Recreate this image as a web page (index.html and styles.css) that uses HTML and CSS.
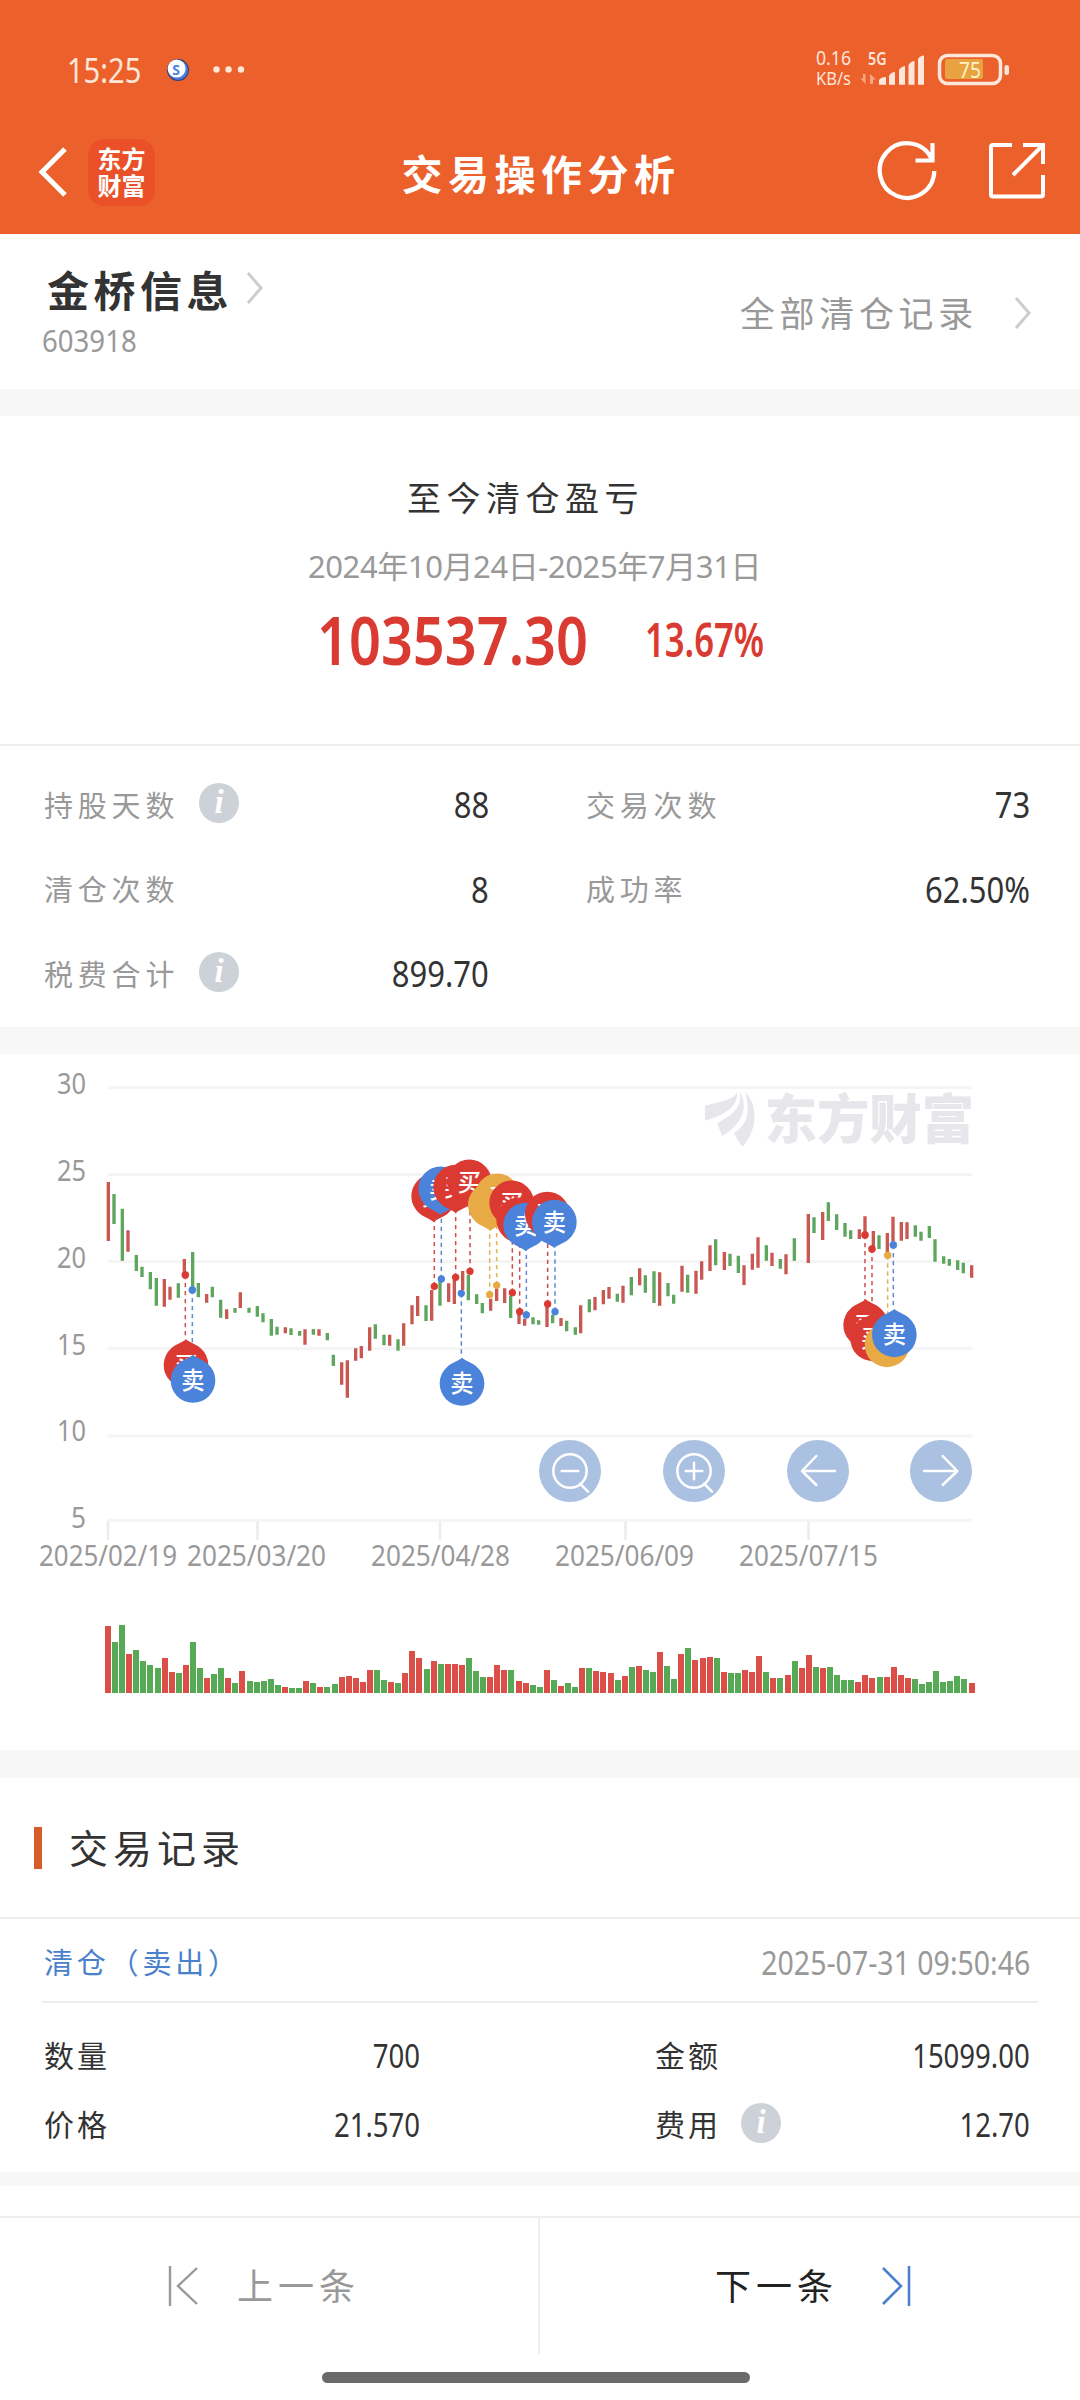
FILE: index.html
```html
<!DOCTYPE html>
<html lang="zh-CN">
<head>
<meta charset="utf-8">
<title>交易操作分析</title>
<link rel="stylesheet" href="styles.css">
</head>
<body>
<header class="top">
  <div class="status">
    <span class="num clock">15:25</span>
    <svg class="notif" width="86" height="28" viewBox="0 0 86 28">
      <circle cx="14" cy="14" r="11" fill="#2f3f78"/><circle cx="14" cy="14" r="10" fill="#4d7be0"/><circle cx="12.6" cy="12.6" r="9" fill="#fff"/>
      <text x="12" y="18.500" font-size="14" font-weight="700" text-anchor="middle" fill="#4d84e0">S</text>
      <circle cx="52.500" cy="13.500" r="3.200" fill="#fde6da"/><circle cx="64.500" cy="13.500" r="3.200" fill="#fde6da"/><circle cx="77" cy="13.500" r="3.200" fill="#fde6da"/>
    </svg>
    <svg class="signals" width="200" height="46" viewBox="815 46 200 46" fill="#fde6da">
      <text x="816" y="64.500" font-size="19" textLength="35" lengthAdjust="spacingAndGlyphs">0.16</text>
      <text x="816" y="84.500" font-size="18" textLength="35" lengthAdjust="spacingAndGlyphs">KB/s</text>
      <text x="868" y="65" font-size="17.500" font-weight="600" textLength="18.500" lengthAdjust="spacingAndGlyphs">5G</text>
      <path d="M865.500 74V84L860.500 78.500H863V74ZM870 84V74L876 79.500H873V84Z" fill="#f7a684"/>
      <path d="M879 84.700V80Q881 77 886 77V84.700ZM889 84.700V76Q891 72 895 72V84.700ZM899 84.700V70Q901 66.500 905 66V84.700ZM908.500 84.700V65Q911 61 914.500 61V84.700ZM918 84.700V59Q920 55.500 924 55.500V84.700Z"/>
      <rect x="945" y="59" width="38" height="20" rx="2" fill="#e8a23f"/>
      <rect x="939.500" y="55.500" width="61" height="28" rx="8" fill="none" stroke="#fde6da" stroke-width="3.500"/>
      <rect x="1004.500" y="65" width="4.500" height="10" rx="2.200"/>
      <text x="959" y="77.500" font-size="21" textLength="22" lengthAdjust="spacingAndGlyphs" fill="#fff3c8">75</text>
    </svg>
  </div>
  <nav class="nav">
    <div class="nav-side">
      <svg width="30" height="52" viewBox="0 0 30 52"><path d="M27 3L4 26L27 49" fill="none" stroke="#fff" stroke-width="5"/></svg>
      <div class="logo"><span>东方</span><span>财富</span></div>
    </div>
    <h1>交易操作分析</h1>
    <div class="nav-side nav-right">
      <svg width="60" height="60" viewBox="877 141 60 60" fill="none" stroke="#fff" stroke-width="4.200"><path d="M934.300 171A27.300 27.300 0 1 1 931.500 158.500M932.500 143V160.500H915.500"/></svg>
      <svg width="60" height="60" viewBox="987 142 60 60" fill="none" stroke="#fff" stroke-width="4"><path d="M1012 146H993Q991 146 991 148V195.500Q991 197.500 993 197.500H1041Q1043 197.500 1043 195.500V176M1023 146H1043V165M1013 176L1042 147"/></svg>
    </div>
  </nav>
</header>

<section class="stock">
  <div>
    <div class="stock-name"><b>金桥信息</b><svg width="18" height="34" viewBox="0 0 18 34"><path d="M2 2L15 17L2 32" fill="none" stroke="#ccc" stroke-width="3"/></svg></div>
    <div class="num stock-code">603918</div>
  </div>
  <div class="all">全部清仓记录<svg width="18" height="34" viewBox="0 0 18 34"><path d="M2 2L15 17L2 32" fill="none" stroke="#ccc" stroke-width="3"/></svg></div>
</section>

<section class="profit">
  <h2>至今清仓盈亏</h2>
  <p class="range">2024年10月24日-2025年7月31日</p>
  <div class="gain">
    <svg width="450" height="64" viewBox="315 612 450 64" fill="#d93a32" font-weight="600">
      <text x="317" y="665" font-size="67" textLength="271" lengthAdjust="spacingAndGlyphs">103537.30</text>
      <text x="645" y="657" font-size="46" textLength="119" lengthAdjust="spacingAndGlyphs">13.67%</text>
    </svg>
  </div>
</section>

<section class="stats">
  <div class="cell"><span>持股天数</span><i class="info">i</i><b class="num">88</b></div>
  <div class="cell"><span>交易次数</span><b class="num">73</b></div>
  <div class="cell"><span>清仓次数</span><b class="num">8</b></div>
  <div class="cell"><span>成功率</span><b class="num">62.50%</b></div>
  <div class="cell"><span>税费合计</span><i class="info">i</i><b class="num">899.70</b></div>
</section>

<section class="chart">
  <svg width="1080" height="540" viewBox="0 1054 1080 540">
    <defs>
      <path id="up" d="M0-77C12-66 30-63 44-50A67 67 0 1 1-44-50C-30-63-12-66 0-77Z"/>
      <path id="down" d="M0 77C12 66 30 63 44 50A67 67 0 1 0-44 50C-30 63-12 66 0 77Z"/>
    </defs>
    <path class="grid" d="M108 1087.500H972M108 1174.500H972M108 1261.500H972M108 1348.500H972M108 1436H972M108 1520.500H972"/>
    <path class="tick" d="M108 1521V1540M257.500 1521V1540M440 1521V1540M625.500 1521V1540M808.500 1521V1540"/>
    <g class="axis">
      <text x="57" y="1094" textLength="29" lengthAdjust="spacingAndGlyphs">30</text>
      <text x="57" y="1181" textLength="29" lengthAdjust="spacingAndGlyphs">25</text>
      <text x="57" y="1268" textLength="29" lengthAdjust="spacingAndGlyphs">20</text>
      <text x="57" y="1355" textLength="29" lengthAdjust="spacingAndGlyphs">15</text>
      <text x="57" y="1441" textLength="29" lengthAdjust="spacingAndGlyphs">10</text>
      <text x="71" y="1528" textLength="15" lengthAdjust="spacingAndGlyphs">5</text>
      <text x="39" y="1566" textLength="138" lengthAdjust="spacingAndGlyphs">2025/02/19</text>
      <text x="187" y="1566" textLength="139" lengthAdjust="spacingAndGlyphs">2025/03/20</text>
      <text x="371" y="1566" textLength="139" lengthAdjust="spacingAndGlyphs">2025/04/28</text>
      <text x="555" y="1566" textLength="139" lengthAdjust="spacingAndGlyphs">2025/06/09</text>
      <text x="739" y="1566" textLength="139" lengthAdjust="spacingAndGlyphs">2025/07/15</text>
    </g>
    <g transform="translate(660 1040) scale(.33333)" fill="#e6e6eb">
      <path d="M232 155C222 180 180 185 135 197V242C190 225 232 205 232 155ZM240 153C248 205 215 225 172 250L186 288C235 260 270 215 240 153ZM256 155C272 225 262 250 222 280Q232 302 247 320C290 275 298 200 256 155Z"/>
      <text x="314" y="296" font-size="160" font-weight="900" textLength="628" lengthAdjust="spacingAndGlyphs">东方财富</text>
    </g>
    <g transform="translate(60 1040) scale(.33333)">
      <path class="rise" d="M145 426V603M204 571V635M313 717V800M330 740V779M373 657V705M440 762V788M500 808V837M541 757V804M676 862V880M735 868V914M777 868V887M845 967V1034M862 961V1073M887 925V962M904 918V955M929 862V932M989 884V917"/>
      <path class="fall" d="M162 462V552M187 506V662M229 645V693M246 680V711M271 696V748M289 714V797M355 730V773M398 636V750M415 729V772M457 740V772M482 779V833M525 804V818M567 803V818M592 798V830M609 820V847M634 837V887M651 860V884M693 865V885M719 873V887M760 867V884M802 879V901M820 944V978M946 853V896M972 884V916M1014 898V932"/>
      <path class="lead red" d="M376 705V898"/><path class="lead blue" d="M397 750V945"/>
      <circle cx="376" cy="705" r="11" class="red"/><circle cx="397" cy="750" r="11" class="blue"/>
      <g class="pin red" transform="translate(378 975)"><use href="#up"/><text y="26">买</text></g>
      <g class="pin blue" transform="translate(399 1021)"><use href="#up"/><text y="26">卖</text></g>
    </g>
    <g transform="translate(360 1040) scale(.33333)">
      <path class="rise" d="M131 850V917M156 796V853M173 768V828M215 750V842M266 730V786M283 720V792M308 693V750M392 776V812M410 745V783M434 745V789M477 815V852M494 836V857M561 790V861M603 834V858M662 796V880M705 771V811M730 750V793M747 741V776M789 737V788M839 685V736M899 697V797M966 677V755M1008 692V761"/>
      <path class="fall" d="M198 796V843M240 725V797M325 705V781M350 763V792M367 789V820M452 768V834M519 832V853M536 841V854M578 825V850M620 842V874M646 862V884M688 778V817M772 761V785M814 711V766M856 706V758M882 694V789M924 729V769M941 764V791M983 704V758"/>
      <path class="lead red" d="M223 739V540M287 712V515M330 694V500M457 758V600M479 815V610M563 792V600"/>
      <path class="lead blue" d="M244 717V530M304 760V950M499 825V630M585 815V624"/>
      <path class="lead gold" d="M389 764V560M410 736V550"/>
      <g class="red"><circle cx="223" cy="739" r="11"/><circle cx="287" cy="712" r="11"/><circle cx="330" cy="694" r="11"/><circle cx="457" cy="758" r="11"/><circle cx="479" cy="815" r="11"/><circle cx="563" cy="792" r="11"/></g>
      <g class="blue"><circle cx="244" cy="717" r="11"/><circle cx="304" cy="760" r="11"/><circle cx="499" cy="825" r="11"/><circle cx="585" cy="815" r="11"/></g>
      <g class="gold"><circle cx="389" cy="764" r="11"/><circle cx="410" cy="736" r="11"/></g>
      <g class="pin red" transform="translate(221 469)"><use href="#down"/><text y="26">买</text></g>
      <g class="pin blue" transform="translate(242 447)"><use href="#down"/><text y="26">卖</text></g>
      <g class="pin red" transform="translate(287 442)"><use href="#down"/><text y="26">买</text></g>
      <g class="pin red" transform="translate(328 426)"><use href="#down"/><text y="26">买</text></g>
      <g class="pin gold" transform="translate(391 495)"><use href="#down"/></g>
      <g class="pin gold" transform="translate(412 468)"><use href="#down"/><text y="25">T</text></g>
      <g class="pin red" transform="translate(455 489)"><use href="#down"/><text y="26">买</text></g>
      <g class="pin red" transform="translate(476 540)"><use href="#down"/></g>
      <g class="pin blue" transform="translate(497 556)"><use href="#down"/><text y="26">卖</text></g>
      <g class="pin red" transform="translate(562 523)"><use href="#down"/><text y="26">买</text></g>
      <g class="pin blue" transform="translate(583 547)"><use href="#down"/><text y="26">卖</text></g>
      <g class="pin blue" transform="translate(306 1030)"><use href="#up"/><text y="26">卖</text></g>
    </g>
    <g transform="translate(660 1040) scale(.33333)">
      <path class="rise" d="M125 664V719M150 616V693M193 636V690M252 676V735M277 641V689M294 592V683M336 638V678M378 643V703M445 522V669M488 516V600M598 568V597M615 529V585M640 573V627M682 579V640M699 530V605M724 546V602M741 547V597M935 676V713"/>
      <path class="fall" d="M167 598V676M210 641V678M235 647V699M319 616V662M361 657V686M403 595V662M462 532V579M505 487V543M530 523V570M555 549V590M572 571V597M657 586V627M766 556V590M783 575V602M808 558V594M825 598V665M851 649V671M868 657V677M893 661V690M910 668V700"/>
      <path class="lead red" d="M615 585V780M636 627V790"/><path class="lead gold" d="M683 646V830"/><path class="lead blue" d="M700 615V800"/>
      <circle cx="615" cy="585" r="11" class="red"/><circle cx="636" cy="627" r="11" class="red"/><circle cx="683" cy="646" r="11" class="gold"/><circle cx="700" cy="615" r="11" class="blue"/>
      <g class="pin red" transform="translate(617 855)"><use href="#up"/><text y="26">买</text></g>
      <g class="pin red" transform="translate(638 896)"><use href="#up"/><text y="26">买</text></g>
      <g class="pin gold" transform="translate(681 914)"><use href="#up"/></g>
      <g class="pin blue" transform="translate(703 884)"><use href="#up"/><text y="26">卖</text></g>
    </g>
    <g class="tools" transform="translate(530 1420) scale(.33333)">
      <circle cx="120" cy="153" r="93"/><path d="M170 153A50 50 0 1 1 70 153A50 50 0 1 1 170 153M95 153H145M150 191L174 215"/>
      <circle cx="492" cy="153" r="93"/><path d="M542 153A50 50 0 1 1 442 153A50 50 0 1 1 542 153M467 153H517M492 128V178M522 191L546 215"/>
      <circle cx="864" cy="153" r="93"/><path d="M915 153H816M859 108L816 153L859 195"/>
      <circle cx="1233" cy="153" r="93"/><path d="M1182 153H1282M1238 108L1282 153L1238 195"/>
    </g>
  </svg>
  <div class="volume" id="volume"></div>
</section>

<section class="records">
  <h3>交易记录</h3>
  <div class="record">
    <div class="record-head"><span>清仓（卖出）</span><time class="num">2025-07-31 09:50:46</time></div>
    <div class="record-grid">
      <div class="cell"><span>数量</span><b class="num">700</b></div>
      <div class="cell"><span>金额</span><b class="num">15099.00</b></div>
      <div class="cell"><span>价格</span><b class="num">21.570</b></div>
      <div class="cell"><span>费用</span><i class="info">i</i><b class="num">12.70</b></div>
    </div>
  </div>
</section>

<footer class="pager">
  <div class="page prev"><svg width="32" height="42" viewBox="0 0 32 42" fill="none" stroke="#999" stroke-width="2.400"><path d="M3 1V41M30 3L11 21L30 39"/></svg><span>上一条</span></div>
  <div class="page next"><span>下一条</span><svg width="32" height="42" viewBox="0 0 32 42" fill="none" stroke="#4a80cc" stroke-width="2.600"><path d="M29 1V41M3 3L21 21L3 39"/></svg></div>
</footer>
<div class="home"></div>
<script src="volume.js"></script>
</body>
</html>
```
FILE: styles.css
```css
* { box-sizing: border-box; }
body {
  margin: 0;
  width: 1080px;
  height: 2400px;
  overflow: hidden;
  background: #fff;
  color: #333;
  font-family: "Noto Sans", "Noto Sans CJK SC", sans-serif;
  line-height: 1;
  display: flex;
  flex-direction: column;
}
body > * { flex: none; }
h1, h2, h3, p { margin: 0; font-weight: 400; }
svg { display: block; overflow: visible; }
.num { font-weight: 400; white-space: nowrap; }

.top { height: 234px; background: #ec602c; color: #fff; display: flex; flex-direction: column; }
.status { height: 110px; padding: 34px 65px 0 67px; display: flex; align-items: center; }
.status .clock { width: 97px; margin-top: -6px; font-size: 35px; color: #fde6da; transform: scaleX(.83); transform-origin: left; }
.notif { margin-top: -4px; }
.signals { margin-left: auto; margin-top: -6px; }
.nav { height: 124px; padding: 0 33px 0 38px; display: flex; align-items: center; justify-content: space-between; }
.nav-side { width: 230px; display: flex; align-items: center; }
.nav-side > svg { flex: none; }
.nav-right { justify-content: flex-end; gap: 50px; margin-top: -2px; }
.logo { margin-left: 20px; width: 67px; height: 67px; border-radius: 16px; background: #ea5128; display: flex; flex-direction: column; align-items: center; justify-content: center; gap: 3px; font-size: 24px; font-weight: 700; }
h1 { font-size: 41px; font-weight: 700; letter-spacing: 5.500px; margin: 4px 3px 0 0; }

.stock { height: 182px; border-bottom: 27px solid #f7f7f7; padding: 36px 48px 0 45px; display: flex; justify-content: space-between; }
.stock-name { display: flex; gap: 13px; height: 43px; padding-left: 2px; font-size: 42px; letter-spacing: 4.500px; }
.stock-name svg { margin-top: 1px; }
.stock-code { margin-top: 12px; font-size: 31px; color: #999; transform: scaleX(.89); transform-origin: left; margin-left: -3px; }
.all { display: flex; align-items: center; height: 86px; gap: 36px; font-size: 35px; letter-spacing: 4.700px; color: #999; }

.profit { height: 330px; border-bottom: 2px solid #eee; display: flex; flex-direction: column; align-items: center; }
.profit h2 { margin: 65px 0 0 -29px; font-size: 34px; letter-spacing: 5.500px; }
.range { margin: 36px 0 0 -11px; font-size: 31px; letter-spacing: -.4px; color: #999; }
.gain { margin-top: 30px; }

.cell { display: flex; align-items: center; }
.cell .num { margin-left: auto; transform: scaleX(.86); transform-origin: right; }
.info { width: 40px; height: 40px; margin-top: -5px; border-radius: 50%; background: #cdd1d8; color: #fff; font: italic 700 33px/38px "Liberation Serif", serif; text-align: center; }
.stats { height: 308px; border-bottom: 27px solid #f7f7f7; padding: 17px 50px 0 44px; display: grid; grid-template-columns: 445px 444px; grid-auto-rows: 84.500px; column-gap: 97px; }
.stats { font-size: 29px; letter-spacing: 4.800px; color: #999; }
.stats .info { margin-left: 20px; letter-spacing: 0; }
.stats .num { font-size: 36px; letter-spacing: 0; color: #333; }

.chart { height: 724px; border-bottom: 28px solid #f7f7f7; }
.chart text { font-family: "Noto Sans", "Noto Sans CJK SC", sans-serif; }
.grid { stroke: #f5f5f5; stroke-width: 3; }
.tick { stroke: #ececec; stroke-width: 2.500; }
.axis { fill: #999; font-size: 29px; }
.rise, .fall { stroke-width: 10; stroke: #c95752; }
.fall { stroke: #5ea65e; }
.red { fill: #db3a32; stroke: #c9504a; }
.blue { fill: #4b82da; stroke: #5c8bd0; }
.gold { fill: #e8aa44; stroke: #e2b258; }
g.red, g.blue, g.gold, circle { stroke: none; }
.lead { stroke-width: 4.500; stroke-dasharray: 13 11; fill: none; }
.pin text { fill: #fff; font-size: 70px; font-weight: 500; text-anchor: middle; }
.tools circle { fill: #abc1e1; }
.tools path { fill: none; stroke: #fff; stroke-width: 7.500; stroke-linecap: round; stroke-linejoin: round; }
.volume { width: 870px; height: 99px; margin-left: 105px; display: flex; align-items: flex-end; justify-content: space-between; }
.volume i { width: 6px; background: #dc4f49; }
.volume .g { background: #57aa55; }

.records { height: 438px; overflow: hidden; }
h3 { height: 141px; border-bottom: 2px solid #eee; padding-left: 34px; display: flex; align-items: center; font-size: 39px; letter-spacing: 5px; }
h3::before { content: ""; width: 8px; height: 42px; margin-right: 27px; background: #d65c28; }
.record { height: 267px; border-bottom: 14px solid #f7f7f7; }
.record-head { height: 84px; margin: 0 42px; padding: 5px 8px 0 2px; border-bottom: 2px solid #eee; display: flex; align-items: center; justify-content: space-between; font-size: 29px; letter-spacing: 3.800px; color: #4a80cc; }
.record-head .num { font-size: 32px; letter-spacing: 0; color: #999; transform: scaleX(.89); transform-origin: right; }
.record-grid { padding: 18px 50px 0 44px; display: grid; grid-template-columns: 376px 375px; grid-auto-rows: 69.500px; justify-content: space-between; font-size: 30px; letter-spacing: 3px; }
.record-grid .info { margin-left: 20px; letter-spacing: 0; }
.record-grid .num { font-size: 32px; letter-spacing: 0; }

.pager { height: 138px; border-top: 2px solid #eee; display: flex; }
.page { width: 541px; padding-top: 2px; display: flex; align-items: center; font-size: 36px; letter-spacing: 5px; color: #222; }
.page svg { margin-top: -2px; }
.page.prev { padding-left: 167px; gap: 38px; color: #999; border-right: 2px solid #eee; }
.page.next { padding-left: 175px; gap: 42px; }
.home { width: 428px; height: 11px; margin: 18px 0 0 322px; border-radius: 6px; background: #6a6a6a; }
```
FILE: volume.js
```js
// One entry per trading day: r = rise, g = fall, followed by three times the bar height.
const days = `r200 g153 g204 r117 g129 g96 g83 g75 r105 r62 g60 r84 g153 g75 r45 g57 g75 r45 g30 r66
g36 g33 g36 g42 g24 r18 g16 g15 r36 g30 r18 g18 g27 r48 r51 r45 r33 r69 g69 g40 r33 g30 r60 r126 r105
g72 r96 g86 r87 r87 r84 g104 g66 g48 r48 r83 r68 g69 r37 r30 g24 g18 r70 g38 r20 g31 g19 r75 g75 r66
r62 r60 g39 r51 g77 r82 g69 g63 r123 g80 g42 r117 g135 r99 r105 r109 g105 r64 g60 g60 r69 r64 r111
g64 r45 g45 r55 g96 r75 r114 g78 r75 g78 g54 g39 g39 r33 r54 r46 g48 r48 r79 r54 r45 g42 g27 g33 g66
g33 g36 g51 g42 r30`.split(/\s+/);

const volume = document.getElementById("volume");
for (const day of days) {
  const bar = document.createElement("i");
  bar.className = day[0];
  bar.style.height = day.slice(1) / 3 + "px";
  volume.append(bar);
}
```
